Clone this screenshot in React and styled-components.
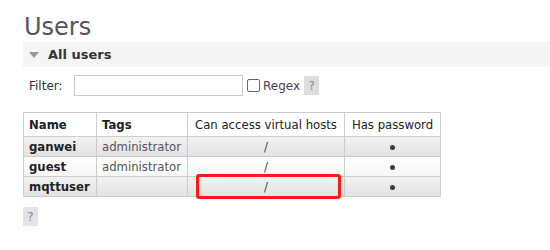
import React from "react";
import styled, { createGlobalStyle } from "styled-components";

const GlobalStyle = createGlobalStyle`
  body {
    margin: 0;
    background: #fff;
    font-family: "DejaVu Sans", Verdana, sans-serif;
    font-size: 12px;
    color: #484848;
  }
`;

const users = [
  { name: "ganwei", tags: "administrator", vhosts: "/", pw: true },
  { name: "guest", tags: "administrator", vhosts: "/", pw: true },
  { name: "mqttuser", tags: "", vhosts: "/", pw: true, marked: true },
];

const App = () => {
  return (
    <Page>
      <GlobalStyle />
      <Title>Users</Title>
      <SectionBar>
        <Arrow />
        <SectionTitle>All users</SectionTitle>
      </SectionBar>
      <FilterRow>
        <FilterLabel>Filter:</FilterLabel>
        <FilterInput type="text" />
        <RegexLabel>
          <CheckBox />
          Regex
        </RegexLabel>
        <HelpButton>?</HelpButton>
      </FilterRow>
      <UserTable>
        <thead>
          <tr>
            <HeadCell $w={73} $align="left" $bold>Name</HeadCell>
            <HeadCell $w={91} $align="left" $bold>Tags</HeadCell>
            <HeadCell $w={157}>Can access virtual hosts</HeadCell>
            <HeadCell $w={96}>Has password</HeadCell>
          </tr>
        </thead>
        <tbody>
          {users.map((u, i) => (
            <Row key={u.name} $alt={i % 2 === 1}>
              <NameCell>{u.name}</NameCell>
              <TagCell>{u.tags}</TagCell>
              <CenterCell>
                {u.vhosts}
                {u.marked && <Highlight />}
              </CenterCell>
              <CenterCell>{u.pw && <Dot />}</CenterCell>
            </Row>
          ))}
        </tbody>
      </UserTable>
      <BottomHelp>?</BottomHelp>
    </Page>
  );
};

const Page = styled.div`
  padding: 13px 0 0 23px;
`;

const Title = styled.h1`
  margin: 0;
  font-family: "DejaVu Sans", Verdana, sans-serif;
  font-weight: normal;
  font-size: 24px;
  line-height: 29px;
  color: #555;
  padding-left: 1px;
`;

const SectionBar = styled.div`
  display: flex;
  align-items: center;
  height: 25px;
  background: #f5f5f5;
  padding-left: 6px;
`;

const Arrow = styled.span`
  width: 0;
  height: 0;
  border-left: 5px solid transparent;
  border-right: 5px solid transparent;
  border-top: 6px solid #999;
  margin-right: 9px;
`;

const SectionTitle = styled.span`
  font-weight: bold;
  font-size: 13px;
  color: #333;
`;

const FilterRow = styled.div`
  display: flex;
  align-items: center;
  height: 21px;
  margin-top: 8px;
  padding-left: 6px;
`;

const FilterLabel = styled.span`
  font-size: 12px;
  color: #333;
  width: 45px;
`;

const FilterInput = styled.input`
  box-sizing: border-box;
  width: 169px;
  height: 21px;
  border: 1px solid #ccc;
  margin: 0;
  outline: none;
`;

const RegexLabel = styled.label`
  display: flex;
  align-items: center;
  font-size: 12px;
  color: #444;
  margin-left: 4px;
`;

const CheckBox = styled.span`
  box-sizing: border-box;
  width: 13px;
  height: 13px;
  border: 1px solid #666;
  border-radius: 2px;
  margin-right: 3px;
`;

const HelpButton = styled.span`
  display: inline-flex;
  align-items: center;
  justify-content: center;
  width: 15px;
  height: 19px;
  background: #ddd;
  color: #888;
  font-size: 12px;
  margin-left: 4px;
`;

const UserTable = styled.table`
  border-collapse: collapse;
  margin-top: 16px;
  table-layout: fixed;
  width: 418px;
  font-size: 11.7px;
  td, th {
    border: 1px solid #ccc;
    padding: 0 5px;
    white-space: nowrap;
    overflow: hidden;
  }
`;

const HeadCell = styled.th`
  width: ${(p) => p.$w - 11}px;
  height: 23px;
  text-align: ${(p) => p.$align || "center"};
  font-weight: ${(p) => (p.$bold ? "bold" : "normal")};
  color: #222;
  background: #fff;
`;

const Row = styled.tr`
  height: 20px;
  background: ${(p) =>
    p.$alt
      ? "linear-gradient(#ffffff, #f6f6f6)"
      : "linear-gradient(#f3f3f3, #e2e2e2)"};
`;

const NameCell = styled.td`
  font-weight: bold;
  color: #222;
`;

const TagCell = styled.td`
  color: #555;
`;

const CenterCell = styled.td`
  position: relative;
  text-align: center;
  color: #444;
  && {
    overflow: visible;
  }
`;

const Dot = styled.span`
  display: inline-block;
  width: 5px;
  height: 5px;
  border-radius: 50%;
  background: #3c3c3c;
  vertical-align: middle;
`;

const Highlight = styled.span`
  position: absolute;
  left: 8px;
  right: 3px;
  top: -3px;
  bottom: -3px;
  border: 3px solid #ff1a12;
  border-radius: 3px;
`;

const BottomHelp = styled.div`
  display: flex;
  align-items: center;
  justify-content: center;
  width: 15px;
  height: 19px;
  margin-top: 10px;
  background: #e4e4e4;
  color: #888;
  font-size: 12px;
`;

export default App;
